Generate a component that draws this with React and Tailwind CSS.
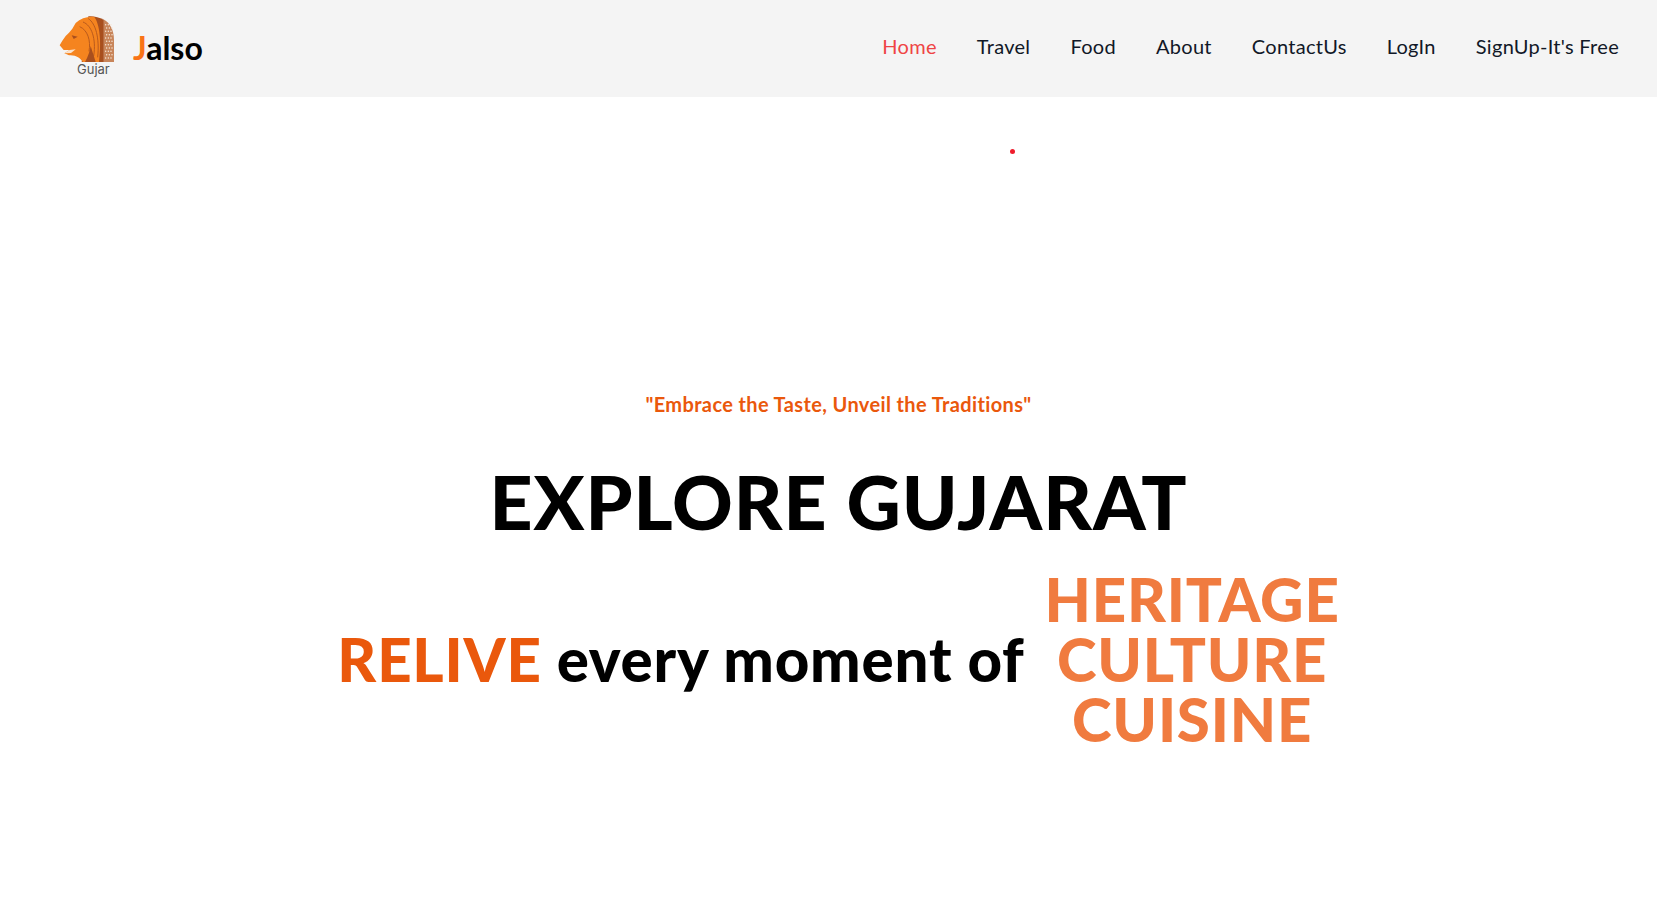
const font = "font-['Lato','Inter',sans-serif]";

const dots = [];
for (let row = 0; row < 11; row++) {
  for (let col = 0; col < 3; col++) {
    dots.push([152 + col * 8 + (row % 2) * 3, 38 + row * 10]);
  }
}

function LionLogo() {
  return (
    <div className="relative w-[65px] h-[66px] shrink-0 -mt-[6px]">
      <svg width="65" height="54" viewBox="0 0 195 162" className="absolute left-0 top-0">
        {/* patterned panel */}
        <path d="M145 22 C165 32 177 55 177 85 L177 150 L145 150 Z" fill="#c8855a" />
        {dots.map(([x, y]) => (
          <circle key={`${x}-${y}`} cx={x} cy={y} r="2.2" fill="#f6e6d8" />
        ))}
        {/* brown band behind the mane */}
        <path d="M100 13 C118 12 132 16 146 23 L146 150 L80 150 Z" fill="#a84f1e" />
        {/* head and mane */}
        <path d="M62 33 C78 18 100 12 118 15 C134 36 140 90 132 150 L84 150 C76 138 62 128 42 130 L28 124 L44 114 L26 114 L14 100 L22 86 L32 72 L42 62 L52 50 Z" fill="#f5841f" />
        {/* mane strokes */}
        <path d="M84 30 C110 40 124 80 116 132 M74 44 C98 54 108 86 102 118 M100 20 C122 34 134 78 128 136" fill="none" stroke="#b95a1d" strokeWidth="3" />
        <path d="M90 150 C100 132 104 118 107 102 L122 150 Z" fill="#a84f1e" />
        <path d="M50 70 L68 74 L56 81 Z" fill="#a84f1e" />
        <path d="M28 124 L44 114 L62 112 L48 123 Z" fill="#fbe3cc" />
      </svg>
      <span className="absolute left-[22px] top-[50px] text-[13px] leading-[14px] text-[#555] font-['Inter',sans-serif]">Gujar</span>
    </div>
  );
}

export default function App() {
  const links = ['Home', 'Travel', 'Food', 'About', 'ContactUs', 'LogIn', "SignUp-It's Free"];
  return (
    <div className={`min-h-[917px] bg-white ${font}`}>
      <nav className="h-[97px] bg-[#f4f4f4] flex items-center justify-between pl-[55px] pr-[38px]">
        <div className="flex items-center gap-[13px] -mt-[2px]">
          <LionLogo />
          <span className="text-[32px] font-bold text-black"><span className="text-[#f97316]">J</span>also</span>
        </div>
        <ul className="flex gap-[40px] text-[20px] tracking-[0.3px] text-[#111827] -mt-[6px]">
          {links.map((l, i) => (
            <li key={l} className={i === 0 ? 'text-[#ef4444]' : ''}>{l}</li>
          ))}
        </ul>
      </nav>
      <main className="relative pl-[20px]">
        <div className="absolute left-[1010px] top-[52px] w-[5px] h-[5px] rounded-full bg-[#ef1c2c]" />
        <div className="flex flex-col items-center pt-[292px]">
          <p className="text-[20px] font-bold tracking-[0.37px] text-[#ea580c]">"Embrace the Taste, Unveil the Traditions"</p>
          <h1 className="mt-[37px] text-[75px] leading-[90px] font-black tracking-[1px] text-black">EXPLORE GUJARAT</h1>
          <div className="mt-[23px] flex items-center gap-[20px] text-[60px] leading-[60px] font-black tracking-[0.8px]">
            <p><span className="text-[#ea580c]">RELIVE</span> <span className="text-black">every moment of</span></p>
            <div className="flex flex-col items-center text-[#f07b3f]">
              <span>HERITAGE</span>
              <span>CULTURE</span>
              <span>CUISINE</span>
            </div>
          </div>
        </div>
      </main>
    </div>
  );
}
